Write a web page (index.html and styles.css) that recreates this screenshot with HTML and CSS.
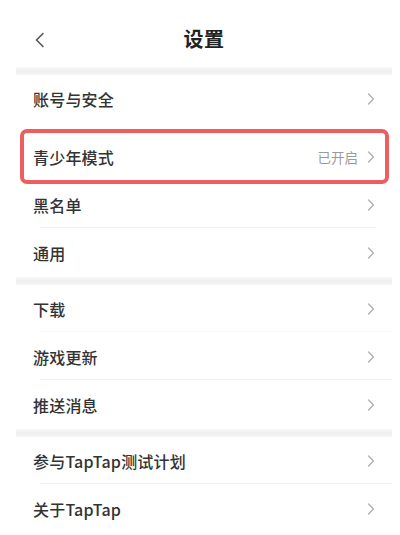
FILE: index.html
```html
<!DOCTYPE html>
<html lang="zh-CN">
<head>
<meta charset="utf-8">
<title>设置</title>
<link rel="stylesheet" href="styles.css">
</head>
<body>
<div class="screen">
  <header class="header">
    <span class="back">
      <svg width="12" height="16" viewBox="0 0 12 16"><polyline points="9,1.5 2.5,8 9,14.5" fill="none" stroke="#555" stroke-width="1.6" stroke-linecap="round" stroke-linejoin="round"/></svg>
    </span>
    <h1 class="title">设置</h1>
  </header>

  <div class="band"></div>
  <section class="group">
    <div class="row first">
      <span class="label">账号与安全</span>
      <span class="tail"><svg class="chev" width="8" height="12" viewBox="0 0 8 12"><polyline points="1.5,1 6.5,6 1.5,11" fill="none" stroke="#b0b0b0" stroke-width="1.4" stroke-linecap="round" stroke-linejoin="round"/></svg></span>
    </div>
    <div class="row highlighted">
      <span class="label">青少年模式</span>
      <span class="tail"><span class="value">已开启</span><svg class="chev" width="8" height="12" viewBox="0 0 8 12"><polyline points="1.5,1 6.5,6 1.5,11" fill="none" stroke="#b0b0b0" stroke-width="1.4" stroke-linecap="round" stroke-linejoin="round"/></svg></span>
      <span class="mark"></span>
    </div>
    <div class="row divided short">
      <span class="label">黑名单</span>
      <span class="tail"><svg class="chev" width="8" height="12" viewBox="0 0 8 12"><polyline points="1.5,1 6.5,6 1.5,11" fill="none" stroke="#b0b0b0" stroke-width="1.4" stroke-linecap="round" stroke-linejoin="round"/></svg></span>
    </div>
    <div class="row">
      <span class="label">通用</span>
      <span class="tail"><svg class="chev" width="8" height="12" viewBox="0 0 8 12"><polyline points="1.5,1 6.5,6 1.5,11" fill="none" stroke="#b0b0b0" stroke-width="1.4" stroke-linecap="round" stroke-linejoin="round"/></svg></span>
    </div>
  </section>

  <div class="band"></div>
  <section class="group">
    <div class="row divided faint">
      <span class="label">下载</span>
      <span class="tail"><svg class="chev" width="8" height="12" viewBox="0 0 8 12"><polyline points="1.5,1 6.5,6 1.5,11" fill="none" stroke="#b0b0b0" stroke-width="1.4" stroke-linecap="round" stroke-linejoin="round"/></svg></span>
    </div>
    <div class="row divided">
      <span class="label">游戏更新</span>
      <span class="tail"><svg class="chev" width="8" height="12" viewBox="0 0 8 12"><polyline points="1.5,1 6.5,6 1.5,11" fill="none" stroke="#b0b0b0" stroke-width="1.4" stroke-linecap="round" stroke-linejoin="round"/></svg></span>
    </div>
    <div class="row">
      <span class="label">推送消息</span>
      <span class="tail"><svg class="chev" width="8" height="12" viewBox="0 0 8 12"><polyline points="1.5,1 6.5,6 1.5,11" fill="none" stroke="#b0b0b0" stroke-width="1.4" stroke-linecap="round" stroke-linejoin="round"/></svg></span>
    </div>
  </section>

  <div class="band"></div>
  <section class="group">
    <div class="row divided">
      <span class="label">参与TapTap测试计划</span>
      <span class="tail"><svg class="chev" width="8" height="12" viewBox="0 0 8 12"><polyline points="1.5,1 6.5,6 1.5,11" fill="none" stroke="#b0b0b0" stroke-width="1.4" stroke-linecap="round" stroke-linejoin="round"/></svg></span>
    </div>
    <div class="row">
      <span class="label">关于TapTap</span>
      <span class="tail"><svg class="chev" width="8" height="12" viewBox="0 0 8 12"><polyline points="1.5,1 6.5,6 1.5,11" fill="none" stroke="#b0b0b0" stroke-width="1.4" stroke-linecap="round" stroke-linejoin="round"/></svg></span>
    </div>
  </section>
</div>
</body>
</html>
```

FILE: styles.css
```css
html, body {
  margin: 0;
  padding: 0;
  background: #ffffff;
}

body {
  font-family: "Noto Sans CJK SC", "Noto Sans", sans-serif;
  color: #333333;
  overflow: hidden;
}

.screen {
  margin: 0 8px 0 16px;
  display: flex;
  flex-direction: column;
}

.header {
  height: 67px;
  display: grid;
  grid-template-columns: 1fr auto 1fr;
  align-items: center;
  box-sizing: border-box;
  padding-top: 11px;
}

.back {
  display: flex;
  align-items: center;
  padding-left: 18px;
  padding-top: 1px;
}

.title {
  margin: 0;
  font-size: 20px;
  font-weight: 700;
  color: #222222;
  line-height: 1;
  letter-spacing: 0.5px;
}

.band {
  height: 8px;
  background: linear-gradient(#f8f8f8, #eeeeee 50%, #f6f6f6);
}

.group {
  display: flex;
  flex-direction: column;
}

.row {
  position: relative;
  height: 48px;
  display: flex;
  align-items: center;
  justify-content: space-between;
  padding: 0 17px 0 17px;
}

.row.highlighted {
  margin-top: 10px;
}

.row.divided::after {
  content: "";
  position: absolute;
  left: 24px;
  right: 0;
  bottom: 1px;
  height: 1px;
  background: #f0f0f0;
}

.row.divided.short::after {
  right: 16px;
}

.row.divided.faint::after {
  background: #f7f7f7;
}

.label {
  font-size: 16px;
  font-weight: 500;
  color: #333333;
  letter-spacing: 0.2px;
}

.tail {
  display: flex;
  align-items: center;
  gap: 9px;
}

.value {
  font-size: 13.5px;
  color: #9a9a9a;
}

.chev {
  display: block;
}

.mark {
  position: absolute;
  left: 4px;
  right: 3px;
  top: -4px;
  bottom: -3px;
  border: 4px solid #ef5d5d;
  border-radius: 7px;
  pointer-events: none;
}
```
